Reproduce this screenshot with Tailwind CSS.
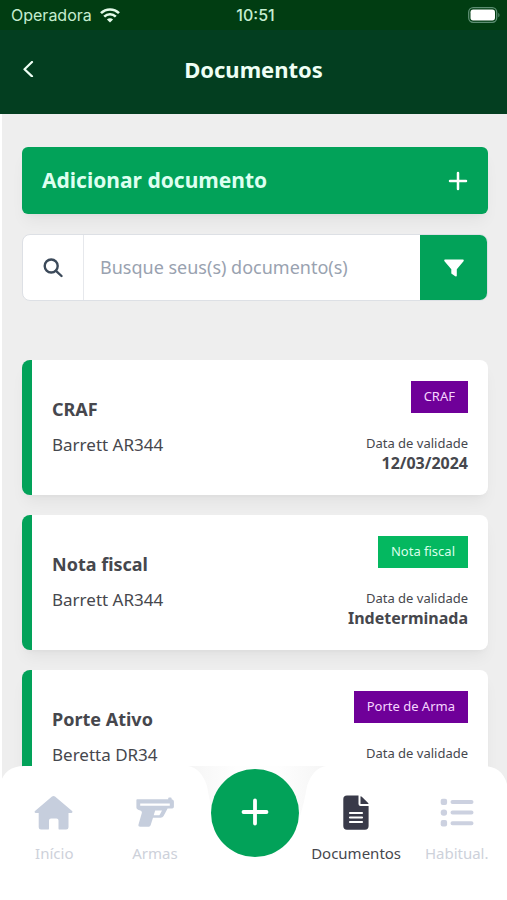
<!DOCTYPE html>
<html lang="pt-BR">
<head>
<meta charset="utf-8">
<meta name="viewport" content="width=device-width, initial-scale=1">
<title>Documentos</title>
<script src="https://cdn.jsdelivr.net/npm/@tailwindcss/browser@4"></script>
</head>
<body class="relative flex h-dvh flex-col overflow-hidden bg-white font-['Noto_Sans',sans-serif] text-[#46474d]">
  <div class="grid h-[30px] shrink-0 grid-cols-3 items-center bg-[#013d12] pr-[7px] pl-[11px] font-['Inter',sans-serif] text-base text-[#c5edd0]">
    <div class="flex items-center gap-2">
      <span>Operadora</span>
      <svg class="h-[15px] w-5" viewBox="0 0 20 15" fill="none" stroke="#e4fbea" stroke-width="2.6" aria-hidden="true">
        <path d="M1 5.2C6 .2 14 .2 19 5.2"/><path d="M4.2 8.6c3.3-3.2 8.300-3.200 11.600 0"/><path d="M10 14.500 6.900 11.400c1.700-1.600 4.500-1.600 6.200 0z" fill="#e4fbea" stroke="none"/>
      </svg>
    </div>
    <span class="text-center font-medium">10:51</span>
    <svg class="h-4 w-8 justify-self-end" viewBox="0 0 32 16" aria-hidden="true">
      <rect x=".7" y=".7" width="28" height="14.600" rx="4.500" fill="none" stroke="#5d8f73" stroke-width="1.300"/>
      <rect x="2.500" y="2.600" width="24.500" height="10.800" rx="2.600" fill="#fff"/>
      <path d="M30.300 5.700c1.600.8 1.600 3.800 0 4.600z" fill="#5d8f73"/>
    </svg>
  </div>

  <header class="grid h-[84px] shrink-0 grid-cols-[1fr_auto_1fr] items-center bg-[#033e20] px-5 pb-1.5 text-[#effff5]">
    <button type="button" aria-label="Voltar" class="size-4">
      <svg class="size-full" viewBox="0 0 16 16" fill="none" stroke="currentColor" stroke-width="2.200" stroke-linecap="round" stroke-linejoin="round"><path d="M12 1 4.500 8.200 12 15.400"/></svg>
    </button>
    <h1 class="text-[22px] font-bold">Documentos</h1>
  </header>

  <main class="flex-1 overflow-hidden border-l-2 border-white bg-[#eeeeee] pt-[33px] pr-[19px] pl-5">
    <button type="button" class="flex h-[67px] w-full items-center justify-between rounded-md bg-[#02a259] px-5 text-[21px] leading-7 font-bold text-[#ddfff0] shadow-lg shadow-black/5">
      <span class="pb-0.5">Adicionar documento</span>
      <svg class="size-5" viewBox="0 0 20 20" fill="none" stroke="#fff" stroke-width="2.500" stroke-linecap="round" aria-hidden="true"><path d="M10 2v16M2 10h16"/></svg>
    </button>

    <form class="mt-5 flex h-[67px] overflow-hidden rounded-lg border border-[#dde0e5] bg-white">
      <label for="busca" aria-label="Buscar" class="flex w-[61px] items-center justify-center border-r border-[#e6e8ec]">
        <svg class="size-5" viewBox="0 0 20 20" fill="none" stroke="#3c4a5a" stroke-width="2.400" stroke-linecap="round"><circle cx="8.200" cy="8" r="6.500"/><path d="m13 12.800 5.500 5.200"/></svg>
      </label>
      <input id="busca" type="search" placeholder="Busque seus(s) documento(s)" class="min-w-0 flex-1 bg-transparent px-4 pb-0.5 text-lg outline-none placeholder:text-[#99a2b0]">
      <button type="button" aria-label="Filtrar" class="flex w-[67px] items-center justify-center bg-[#02a259]">
        <svg class="size-5" viewBox="0 0 20 20" fill="#fff"><path d="M1.300 1.500h17.400c1 0 1.400 1 .8 1.700l-6.700 8v6.200c0 .9-.9 1.300-1.600.9l-3.200-2.200c-.4-.3-.7-.7-.7-1.200v-3.700L.5 3.200C-.1 2.500.3 1.500 1.300 1.500z"/></svg>
      </button>
    </form>

    <ul class="mt-[59px] flex flex-col gap-5">
      <li class="flex h-[135px] shrink-0 justify-between rounded-lg border-l-10 border-[#02a259] bg-white px-5 shadow-lg shadow-black/5">
        <div class="pt-[35px]">
          <h2 class="text-lg font-bold">CRAF</h2>
          <p class="mt-2 text-[17px] leading-7">Barrett AR344</p>
        </div>
        <div class="flex flex-col items-end pt-[21px]">
          <span class="flex h-8 items-center bg-[#6f0099] px-[13px] text-[13px] text-[#f6d6ff]">CRAF</span>
          <span class="mt-5 text-[13px] leading-5">Data de validade</span>
          <strong class="text-base leading-5">12/03/2024</strong>
        </div>
      </li>
      <li class="flex h-[135px] shrink-0 justify-between rounded-lg border-l-10 border-[#02a259] bg-white px-5 shadow-lg shadow-black/5">
        <div class="pt-[35px]">
          <h2 class="text-lg font-bold">Nota fiscal</h2>
          <p class="mt-2 text-[17px] leading-7">Barrett AR344</p>
        </div>
        <div class="flex flex-col items-end pt-[21px]">
          <span class="flex h-8 items-center bg-[#04b860] px-[13px] text-[13px] text-[#d9ffeb]">Nota fiscal</span>
          <span class="mt-5 text-[13px] leading-5">Data de validade</span>
          <strong class="text-base leading-5">Indeterminada</strong>
        </div>
      </li>
      <li class="flex h-[135px] shrink-0 justify-between rounded-lg border-l-10 border-[#02a259] bg-white px-5 shadow-lg shadow-black/5">
        <div class="pt-[35px]">
          <h2 class="text-lg font-bold">Porte Ativo</h2>
          <p class="mt-2 text-[17px] leading-7">Beretta DR34</p>
        </div>
        <div class="flex flex-col items-end pt-[21px]">
          <span class="flex h-8 items-center bg-[#6f0099] px-[13px] text-[13px] text-[#f6d6ff]">Porte de Arma</span>
          <span class="mt-5 text-[13px] leading-5">Data de validade</span>
        </div>
      </li>
    </ul>
  </main>

  <nav class="absolute inset-x-0 bottom-0 h-[134px]">
    <svg class="absolute inset-0 size-full" viewBox="0 0 507 134" preserveAspectRatio="none" aria-hidden="true">
      <defs><linearGradient id="notch" x1="0" y1="0" x2="1" y2="0"><stop offset="0" stop-color="#f5f5f5"/><stop offset=".35" stop-color="#fefefe"/><stop offset=".65" stop-color="#fefefe"/><stop offset="1" stop-color="#f5f5f5"/></linearGradient></defs>
      <path d="M188 0h138v134H188z" fill="url(#notch)"/>
      <path d="M0 134V18Q5 0 24 0h164q13 2 19 20 12 73 50 73t50-73q6-18 19-20h157q19 0 24 18v116z" fill="#fff"/>
    </svg>
    <ul class="relative grid grid-cols-5 justify-items-center pl-1 text-[15px] leading-6 text-[#cdd1da]">
      <li><a href="#" class="flex flex-col items-center gap-2 pt-[27px]">
        <svg class="h-10 w-10" viewBox="0 0 40 40" fill="#c6cedd" aria-hidden="true"><path d="M18 3.600q1.500-1.200 3 0L38.100 18q1 1.300-.6 2h-3v14.300q0 2.300-2.300 2.300h-6.500q-1.200 0-1.200-1.200V27.500q0-2-2-2h-5.500q-2 0-2 2v7.900q0 1.200-1.200 1.200H7q-2.300 0-2.300-2.300V20H1.600q-1.700-.7-.6-2z"/></svg>
        <span>Início</span></a></li>
      <li><a href="#" class="flex flex-col items-center gap-2 pt-[27px]">
        <svg class="h-10 w-10" viewBox="0 0 40 40" fill="#c6cedd" aria-hidden="true"><path fill-rule="evenodd" d="M2.200 6.200h31V5.300q0-.9.900-.9h1.600q.9 0 .9.900v.9q2.300.2 2.300 2.300v5.300q0 1.700-1.700 1.700h-4.600l-4 7.600q-1 1.700-3 1.700h-7.600L15.700 32q-.4 1.700-2 1.700H5.200q-2.200 0-1.700-2.200l3.400-11.700q.3-1.600-1.500-2.300Q1.400 16.500 1.400 14.500V7q0-.8.800-.8zM5.200 10.400v2.300h29.600v-2.300zM20.200 17.600l-1.500 4.700h4.700q1 0 1.500-.9l2.100-3.800z"/></svg>
        <span>Armas</span></a></li>
      <li class="pt-[3px]"><button type="button" aria-label="Adicionar" class="flex size-[88px] items-center justify-center rounded-full bg-[#02a259]">
        <svg class="size-8" viewBox="0 0 32 32" fill="none" stroke="#fff" stroke-width="3.800" stroke-linecap="round"><path d="M16 3.500v23M4.500 15h23"/></svg></button></li>
      <li><a href="#" aria-current="page" class="flex flex-col items-center gap-2 pt-[27px] text-[#46474d]">
        <svg class="h-10 w-10" viewBox="0 0 40 40" aria-hidden="true"><path d="M11 2.500h11.500v8.500q0 2 2 2h8.100v20q0 3.700-3.700 3.700H11q-3.700 0-3.700-3.700V6.200q0-3.700 3.700-3.700zM24.500 3.200q.8 0 1.300.5l6.100 6.100q.6.600.7 1.300h-8.100z" fill="#393a49"/><path d="M14 20h12M14 24.500h12M14 29h12" stroke="#fff" stroke-width="2.200" stroke-linecap="round"/></svg>
        <span>Documentos</span></a></li>
      <li><a href="#" class="flex flex-col items-center gap-2 pt-[27px]">
        <svg class="h-10 w-10" viewBox="0 0 40 40" fill="#ccd1e0" aria-hidden="true"><rect x="3.700" y="5.700" width="6.400" height="6.400" rx="2"/><rect x="3.700" y="16.400" width="6.400" height="6.400" rx="3"/><rect x="3.700" y="27" width="6.400" height="6.400" rx="2"/><path d="M15.500 9h19M15.500 19.600h19M15.500 30.200h19" stroke="#ccd1e0" stroke-width="4" stroke-linecap="round"/></svg>
        <span>Habitual.</span></a></li>
    </ul>
  </nav>
</body>
</html>
